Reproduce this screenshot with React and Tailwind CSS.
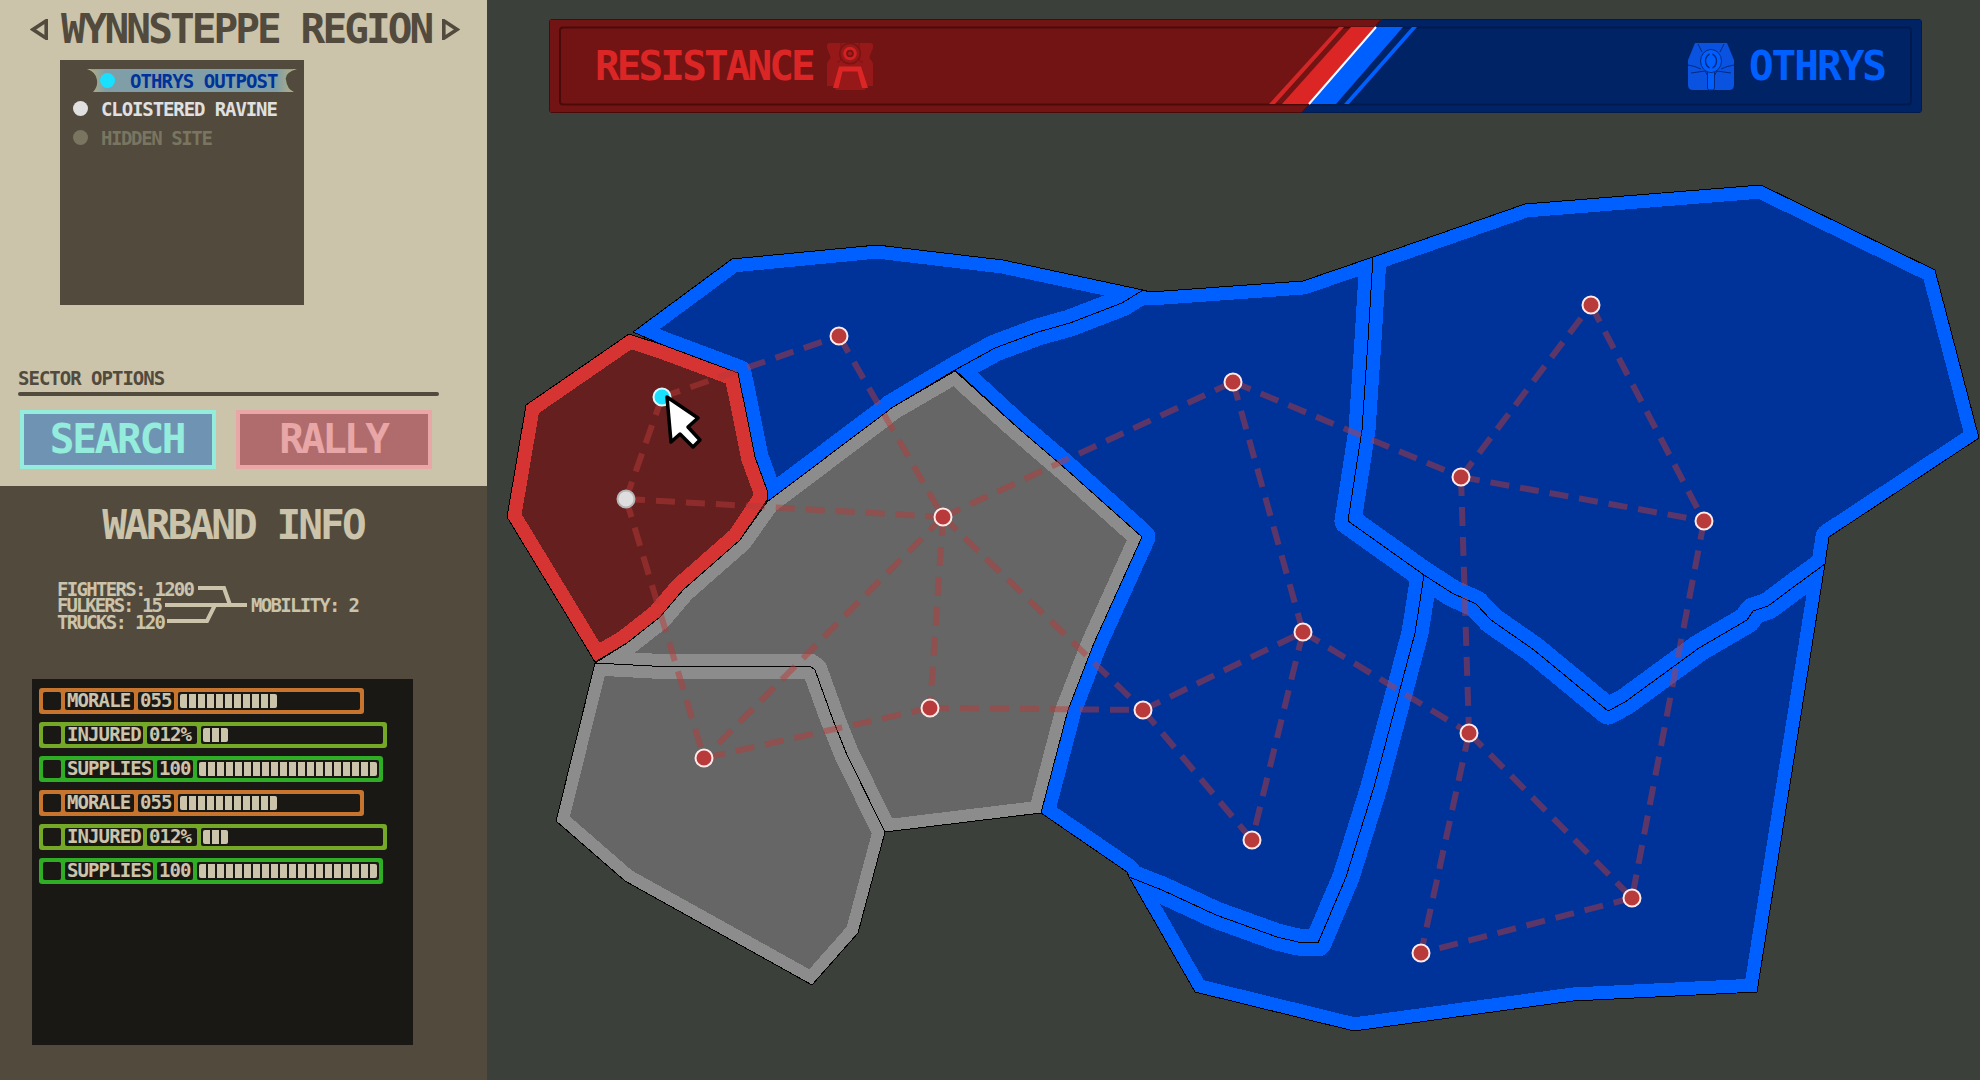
const regions = [
  { id: "red", fill: "#651f1f", edge: "#d63333", width: 28, points: "629,334 663,345 738,373 747,417 755,457 767,490 767,500 740,540 683,590 660,617 627,643 595,662 507,517 526,405" },
  { id: "nw", fill: "#003399", edge: "#0060ff", width: 27, points: "633,332 732,259 877,245 1003,260 1143,290 1122,303 1070,323 1038,332 995,348 955,370 893,407 767,502 767,490 755,457 747,417 738,373 663,345" },
  { id: "mid", fill: "#666666", edge: "#8c8c8c", width: 25, points: "955,371 1017,427 1067,470 1142,537 1127,570 1094,643 1068,710 1041,813 885,832 847,755 833,720 815,670 810,666 652,666 595,663 627,643 660,617 683,590 740,540 767,502 893,407" },
  { id: "south", fill: "#666666", edge: "#8c8c8c", width: 25, points: "595,663 652,666 810,666 815,670 833,720 847,755 885,832 858,933 812,985 625,881 556,821" },
  { id: "center", fill: "#003399", edge: "#0060ff", width: 27, points: "955,370 995,348 1038,332 1070,323 1122,303 1143,290 1150,292 1303,281 1373,257 1368,340 1362,430 1348,521 1424,575 1415,633 1374,787 1346,877 1318,943 1298,942 1277,937 1216,915 1162,890 1129,877 1127,872 1041,813 1068,710 1094,643 1127,570 1142,537 1067,470 1017,427" },
  { id: "se", fill: "#003399", edge: "#0060ff", width: 27, points: "1424,575 1452,593 1476,604 1491,620 1534,650 1608,711 1625,702 1699,648 1747,620 1753,611 1768,606 1799,583 1825,564 1757,992 1573,1001 1354,1031 1195,992 1129,877 1162,890 1216,915 1277,937 1298,942 1318,943 1346,877 1374,787 1415,633" },
  { id: "ne", fill: "#003399", edge: "#0060ff", width: 27, points: "1373,257 1525,204 1761,185 1935,270 1979,438 1829,537 1825,564 1799,583 1768,606 1753,611 1747,620 1699,648 1625,702 1608,711 1534,650 1491,620 1476,604 1452,593 1424,575 1348,521 1362,430 1368,340" },
];

const nodes = [
  [662, 397], [626, 499], [839, 336], [943, 517], [930, 708], [704, 758], [1233, 382], [1143, 710],
  [1303, 632], [1252, 840], [1461, 477], [1591, 305], [1704, 521], [1469, 733], [1632, 898], [1421, 953],
];

const links = [
  [0, 2], [0, 1], [1, 3], [1, 5], [2, 3], [3, 6], [3, 4], [3, 5], [3, 7], [4, 7], [4, 5], [6, 10], [6, 8],
  [7, 8], [7, 9], [8, 9], [8, 13], [10, 11], [10, 12], [10, 13], [11, 12], [12, 14], [13, 14], [13, 15], [14, 15],
];

const statRows = [
  { label: "MORALE", value: "055", labelW: "w-[69px]", valueW: "w-[36px]", ticks: 11, rowW: "w-[325px]", color: "bg-[#c7752e]" },
  { label: "INJURED", value: "012%", labelW: "w-[78px]", valueW: "w-[50px]", ticks: 3, rowW: "w-[348px]", color: "bg-[#76a827]" },
  { label: "SUPPLIES", value: "100", labelW: "w-[88px]", valueW: "w-[36px]", ticks: 20, rowW: "w-[344px]", color: "bg-[#2fae25]" },
  { label: "MORALE", value: "055", labelW: "w-[69px]", valueW: "w-[36px]", ticks: 11, rowW: "w-[325px]", color: "bg-[#c7752e]" },
  { label: "INJURED", value: "012%", labelW: "w-[78px]", valueW: "w-[50px]", ticks: 3, rowW: "w-[348px]", color: "bg-[#76a827]" },
  { label: "SUPPLIES", value: "100", labelW: "w-[88px]", valueW: "w-[36px]", ticks: 20, rowW: "w-[344px]", color: "bg-[#2fae25]" },
];

const ResistanceEmblem = () => (
  <svg width="60" height="56" viewBox="0 0 60 56" className="shrink-0">
    <path d="M10 5 H50 Q54 5 53 10 L51 15 Q49 19 50 21 Q54 24 53 30 V48 L46 48 L45 52 H16 L14 48 L7 48 V30 Q6 24 10 21 Q11 19 9 15 L7 10 Q6 5 10 5 Z" fill="#961818" />
    <path d="M21 5 V18 Q22 24 17 24 M39 5 V18 Q38 24 43 24" fill="none" stroke="#7a1313" strokeWidth="1" />
    <circle cx="30" cy="15.5" r="11" fill="#7a1313" />
    <circle cx="30" cy="15.5" r="9.5" fill="#961818" />
    <circle cx="30" cy="15.5" r="6.8" fill="#d42020" />
    <circle cx="30" cy="15.5" r="3.8" fill="#7a1313" />
    <circle cx="30" cy="15.5" r="2" fill="#a51a1a" />
    <path d="M13 50 L19 28.5 H41 L48 50 H42 L37.5 33.5 H22.5 L18.5 50 Z" fill="#dc2626" />
  </svg>
);

const OthrysEmblem = () => (
  <svg width="60" height="56" viewBox="0 0 60 56" className="shrink-0">
    <path d="M7 22 L14 5 H46 L53 22 V47 Q53 52 48 52 H12 Q7 52 7 47 Z" fill="#0a52e0" />
    <path d="M7 27 Q14 28 20 31 M53 27 Q46 28 40 31 M10 35 L24 33 L27 38 M50 35 L36 33 L33 38 M17 6 Q20 12 21 14 M43 6 Q40 12 39 14" fill="none" stroke="#002a80" strokeWidth="1" />
    <rect x="26.5" y="30" width="7" height="22" rx="2" fill="#0060ff" stroke="#002a80" strokeWidth="1" />
    <ellipse cx="30" cy="23" rx="10.5" ry="11.5" fill="#0060ff" stroke="#002a80" strokeWidth="1" />
    <ellipse cx="30" cy="23" rx="5.5" ry="7" fill="none" stroke="#002a80" strokeWidth="1.4" />
    <rect x="28.6" y="12" width="2.8" height="22" fill="#0060ff" />
  </svg>
);

const Triangle = ({ dir }) => (
  <svg width="18" height="21" viewBox="0 0 18 21" className="shrink-0">
    <path d={dir === "left" ? "M16.2 1.8 V19.2 L3 10.5 Z" : "M1.8 1.8 V19.2 L15 10.5 Z"} fill="none" stroke="#514a3d" strokeWidth="3.6" />
  </svg>
);

const StatRow = ({ row }) => (
  <div className={`${row.rowW} ${row.color} h-[26px] rounded-[3px] p-1 flex gap-1 text-[#cbc3aa] text-[19px] leading-[16px] tracking-[-0.9px]`}>
    <div className="w-[18px] rounded-[2px] bg-[#1a1814]"></div>
    <div className={`${row.labelW} rounded-[2px] bg-[#1a1814] pl-[2px] whitespace-nowrap`}>{row.label}</div>
    <div className={`${row.valueW} rounded-[2px] bg-[#1a1814] pl-[2px] whitespace-nowrap`}>{row.value}</div>
    <div className="flex-1 rounded-[2px] bg-[#1a1814] flex items-center gap-[2px] pl-[2px]">
      {Array.from({ length: row.ticks }).map((_, i) => (
        <div key={i} className="w-[7px] h-[14px] bg-[#cbc3aa] first:rounded-l-[2px] last:rounded-r-[2px]"></div>
      ))}
    </div>
  </div>
);

const RegionMap = () => (
  <svg viewBox="487 113 1493 967" className="block w-[1493px] h-[967px]">
    <defs>
      {regions.map((r) => (
        <clipPath id={`clip-${r.id}`} key={r.id}>
          <polygon points={r.points} />
        </clipPath>
      ))}
    </defs>

    {regions.map((r) => (
      <g key={r.id} shapeRendering="crispEdges">
        <polygon points={r.points} fill={r.fill} />
        <polygon points={r.points} fill="none" stroke={r.edge} strokeWidth={r.width} strokeLinejoin="round" clipPath={`url(#clip-${r.id})`} />
      </g>
    ))}
    {regions.map((r) => (
      <polygon key={r.id} points={r.points} fill="none" stroke="#000" strokeWidth="1" shapeRendering="crispEdges" />
    ))}

    {/* routes between sites */}
    {links.map(([a, b]) => (
      <line
        key={`${a}-${b}`}
        x1={nodes[a][0]}
        y1={nodes[a][1]}
        x2={nodes[b][0]}
        y2={nodes[b][1]}
        stroke="#b83a3a"
        strokeOpacity="0.5"
        strokeWidth="6"
        strokeDasharray="19 11"
      />
    ))}

    {nodes.map(([x, y], i) => {
      let fill = "#b83a3a";
      let stroke = "#ffe8e8";
      if (i === 0) {
        fill = "#19e0ff";
        stroke = "#d8f8ff";
      }
      if (i === 1) {
        fill = "#dedede";
        stroke = "#b5b5b5";
      }
      return <circle key={i} cx={x} cy={y} r="8.5" fill={fill} stroke={stroke} strokeWidth="2" />;
    })}

    {/* mouse pointer */}
    <path d="M667 397 L698 418 L688 427 L700 440 L693 447 L680 434 L671 442 Z" fill="#fff" stroke="#000" strokeWidth="3.5" strokeLinejoin="round" />
  </svg>
);

export default function App() {
  return (
    <div className="w-[1980px] h-[1080px] flex overflow-hidden bg-[#3c403a] font-['DejaVu_Sans_Mono',monospace] font-bold">
      {/* Left column */}
      <div className="w-[487px] shrink-0 flex flex-col">
        <div className="h-[486px] bg-[#cbc3aa] flex flex-col">
          <div className="mt-[14px] ml-[30px] h-[30px] flex items-center text-[#514a3d] text-[41px] leading-[30px] tracking-[-2.9px]">
            <Triangle dir="left" />
            <span className="ml-[13px] w-[381px] whitespace-nowrap">WYNNSTEPPE REGION</span>
            <Triangle dir="right" />
          </div>

          <div className="mt-[16px] ml-[60px] w-[244px] h-[245px] bg-[#514a3d] pt-[9px] flex flex-col gap-[5px] text-[19px] leading-[14px]">
            <div className="relative ml-[27px] w-[210px] h-[23px] flex items-center pl-[13px]">
              <svg width="210" height="23" viewBox="0 0 210 23" className="absolute left-0 top-0">
                <defs>
                  <linearGradient id="banner" x1="0" x2="1" y1="0" y2="0">
                    <stop offset="0" stopColor="#bdb27a" />
                    <stop offset="0.09" stopColor="#7f9ea8" />
                    <stop offset="0.9" stopColor="#7f9ea8" />
                    <stop offset="1" stopColor="#bdb27a" />
                  </linearGradient>
                </defs>
                <path d="M0 0 H210 Q197 4 199 11 Q200 20 207 23 H6 Q11 18 10 11 Q9 3 0 0 Z" fill="url(#banner)" />
                <path d="M4 0.5 H206" stroke="#6fae9d" strokeWidth="1" />
              </svg>
              <div className="relative w-[15px] h-[15px] rounded-full bg-[#19e0ff]"></div>
              <span className="relative ml-[15px] text-[#003399] tracking-[-0.9px] whitespace-nowrap">OTHRYS OUTPOST</span>
            </div>
            <div className="h-[23px] flex items-center pl-[13px]">
              <div className="w-[15px] h-[15px] rounded-full bg-[#e0e0e0]"></div>
              <span className="ml-[13px] text-[#e0e0e0] tracking-[-1.1px] whitespace-nowrap">CLOISTERED RAVINE</span>
            </div>
            <div className="mt-[1px] h-[23px] flex items-center pl-[13px]">
              <div className="w-[15px] h-[15px] rounded-full bg-[#7a7560]"></div>
              <span className="ml-[13px] text-[#7a7560] tracking-[-1.4px] whitespace-nowrap">HIDDEN SITE</span>
            </div>
          </div>

          <div className="mt-[67px] ml-[18px] h-[14px] text-[#514a3d] text-[19px] leading-[13px] tracking-[-1px]">SECTOR OPTIONS</div>
          <div className="mt-[6px] ml-[18px] w-[421px] h-[4px] rounded-full bg-[#514a3d]"></div>

          <div className="mt-[14px] ml-[20px] flex gap-[20px] text-[41px]">
            <button className="w-[196px] h-[59px] pr-[2px] border-4 border-[#94ecdc] bg-[#6f94b3] text-[#94ecdc] tracking-[-2.3px] flex items-center justify-center font-bold">SEARCH</button>
            <button className="w-[196px] h-[59px] pr-[2px] border-4 border-[#e8a6a6] bg-[#b06c6c] text-[#e8a6a6] tracking-[-3.2px] flex items-center justify-center font-bold">RALLY</button>
          </div>
        </div>

        <div className="flex-1 bg-[#514a3d] flex flex-col text-[#cbc3aa]">
          <div className="mt-[24px] w-[466px] h-[30px] text-center text-[41px] leading-[30px] tracking-[-2.9px]">WARBAND INFO</div>

          <div className="mt-[41px] ml-[57px] h-[48px] flex items-center text-[19px] leading-[14px] tracking-[-1.7px]">
            <div className="w-[108px] flex flex-col gap-[2.5px] whitespace-nowrap">
              <span>FIGHTERS: 1200</span>
              <span className="tracking-[-2px]">FULKERS: 15</span>
              <span>TRUCKS: 120</span>
            </div>
            <svg width="82" height="48" viewBox="165 582 82 48" className="shrink-0">
              <path d="M198 589 H224 L230 606 M165 606 H247 M167 622 H207 L215 606" fill="none" stroke="#cbc3aa" strokeWidth="4" />
            </svg>
            <span className="ml-[4px] whitespace-nowrap">MOBILITY: 2</span>
          </div>

          <div className="mt-[50px] ml-[32px] w-[381px] h-[366px] bg-[#1a1814] pt-[9px] pl-[7px] flex flex-col gap-[8px]">
            {statRows.map((row, i) => (
              <StatRow row={row} key={i} />
            ))}
          </div>
        </div>
      </div>

      {/* Map side */}
      <div className="flex-1 flex flex-col">
        <div className="relative mt-[19px] ml-[62px] w-[1373px] h-[94px] shrink-0 rounded-[4px] bg-[#002366] overflow-hidden">
          <svg viewBox="549 19 1373 94" className="absolute inset-0 w-full h-full">
            <polygon points="549,19 1382,19 1302,113 549,113" fill="#721414" />
            <path d="M549.5 19.5 H1381 L1302 112.5 H549.5 Z" fill="none" stroke="#4a0a0a" strokeWidth="1" />
            <path d="M1382 19.5 H1921.5 V112.5 H1302" fill="none" stroke="#001a4d" strokeWidth="1" />
            <path d="M1376 27.5 H563 Q560 27.5 560 30.5 V101.5 Q560 104.5 563 104.5 H1309" fill="none" stroke="#4a0a0a" strokeWidth="2" />
            <path d="M1376 27.5 H1908 Q1911 27.5 1911 30.5 V101.5 Q1911 104.5 1908 104.5 H1309" fill="none" stroke="#001a4d" strokeWidth="2" />
            <polygon points="1339,27 1344,27 1275,104 1269,104" fill="#d42626" />
            <polygon points="1351,27 1376,27 1309,104 1282,104" fill="#dc2626" />
            <polygon points="1376,27 1403,27 1336,104 1309,104" fill="#0060ff" />
            <polygon points="1412,27 1417,27 1349,104 1344,104" fill="#0060ff" />
            <path d="M1376 27 L1309 104" stroke="#fff" strokeWidth="2" />
          </svg>
          <div className="relative h-full flex items-center justify-between pl-[46px] pr-[37px] text-[41px]">
            <div className="flex items-center">
              <span className="mt-[2px] text-[#dc2626] tracking-[-2.9px] whitespace-nowrap">RESISTANCE</span>
              <div className="ml-[7px]"><ResistanceEmblem /></div>
            </div>
            <div className="flex items-center">
              <OthrysEmblem />
              <span className="mt-[2px] ml-[8px] text-[#0060ff] tracking-[-2px] whitespace-nowrap">OTHRYS</span>
            </div>
          </div>
        </div>

        <RegionMap />
      </div>
    </div>
  );
}
